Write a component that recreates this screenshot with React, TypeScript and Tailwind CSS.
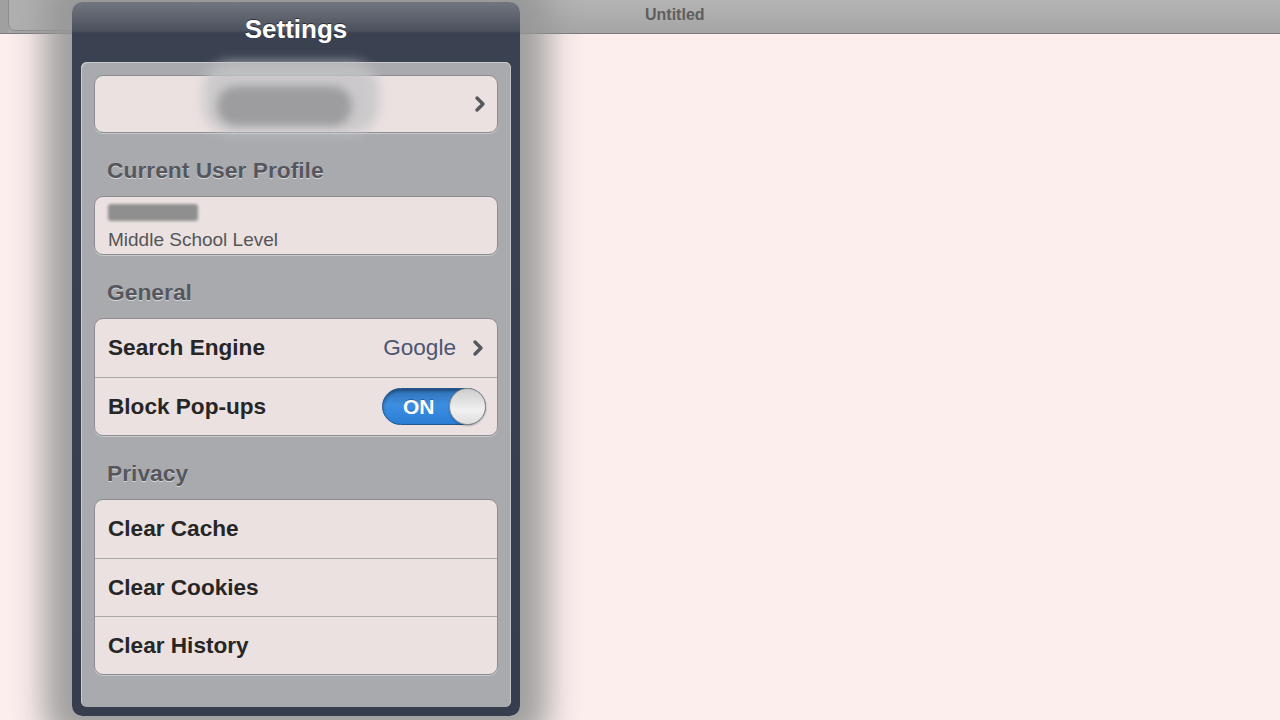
import React from "react";

const font = { fontFamily: '"Liberation Sans", Arial, sans-serif' };

function Chevron() {
  return (
    <svg width="12" height="18" viewBox="0 0 12 18" className="shrink-0">
      <path d="M3 3 L9 9 L3 15" fill="none" stroke="#56585d" strokeWidth="3.4" strokeLinecap="round" strokeLinejoin="round" />
    </svg>
  );
}

function SectionTitle({ children }: { children: React.ReactNode }) {
  return (
    <div className="h-[63px] pl-[26px] pt-[25px] text-[22.8px] font-bold leading-[24px] text-[#55575d] [text-shadow:0_1px_0_rgba(255,255,255,0.55)]">
      {children}
    </div>
  );
}

function Group({ children }: { children: React.ReactNode }) {
  return (
    <div className="mx-[13px] overflow-hidden rounded-[9px] border border-[#8b8c90] bg-[#ebe1e1] shadow-[0_1px_0_#c9cacd]">
      {children}
    </div>
  );
}

function Row({ label, first, children }: { label: string; first?: boolean; children?: React.ReactNode }) {
  return (
    <div
      className={
        "flex h-[58px] items-center justify-between pl-[13px] pr-[13px] " +
        (first ? "" : "border-t border-[#aaa7a8]")
      }
    >
      <span className="text-[22.6px] font-bold text-[#262626]">{label}</span>
      {children}
    </div>
  );
}

function Toggle() {
  return (
    <div className="relative -mr-[2px] flex h-[37px] w-[104px] items-center rounded-full border border-[#23598f] bg-[linear-gradient(to_bottom,#2f6fb4_0%,#3d8ee0_45%,#2a7ed6_100%)] shadow-[inset_0_2px_3px_rgba(0,0,0,0.35)]">
      <span className="ml-[20px] text-[21px] font-bold text-white [text-shadow:0_-1px_0_rgba(0,0,0,0.3)]">ON</span>
      <div className="absolute right-[-1px] top-[-1px] h-[37px] w-[37px] rounded-full border border-[#8e8e8e] bg-[linear-gradient(to_bottom,#cdcdcd_0%,#f0f0f0_60%,#dedede_100%)] shadow-[0_1px_2px_rgba(0,0,0,0.3)]" />
    </div>
  );
}

export default function App() {
  return (
    <div className="relative h-[720px] w-[1280px] overflow-hidden bg-[#fdeeee]" style={font}>
      {/* top toolbar */}
      <div className="flex h-[34px] border-b border-[#7b7b7b] bg-[linear-gradient(to_bottom,#b4b4b4,#a5a5a5)]">
        <div className="w-[8px] bg-[#a0a0a0]" />
        <div className="h-[31px] w-[192px] rounded-bl-[7px] border-b border-l border-r border-[#8d8d8d] bg-[#b0b0b0]" />
        <div className="w-[32px]" />
        <div className="flex flex-1 items-start border-l border-[#8d8d8d] pl-[412px] pt-[3px]">
          <span className="text-[16px] font-bold text-[#5e5e5e]">Untitled</span>
        </div>
      </div>

      {/* settings popover */}
      <div className="absolute left-[72px] top-[2px] flex h-[714px] w-[448px] flex-col rounded-[10px] bg-[linear-gradient(to_bottom,#72767f_0px,#4b515d_29px,#3a4151_31px,#363d4c_100%)] px-[9px] pb-[9px] shadow-[0_0_32px_28px_rgba(150,150,150,0.9)]">
        <div className="flex h-[60px] items-center justify-center pb-[6px]">
          <span className="text-[26px] font-bold text-white [text-shadow:0_-1px_0_rgba(0,0,0,0.5)]">Settings</span>
        </div>

        <div className="flex-1 rounded-[6px] bg-[#a9aaae] pt-[13px] shadow-[inset_1px_1px_0_#c9cacd,inset_-1px_0_0_#c0c1c4]">
          {/* account row */}
          <div className="relative">
            <div className="relative mx-[13px] flex h-[58px] items-center justify-end rounded-[9px] border border-[#8b8c90] bg-[#ebe1e1] pr-[11px] shadow-[0_1px_0_#c9cacd]">
              <div className="absolute left-[108px] top-[-14px] h-[72px] w-[176px] rounded-[28px] bg-[#c4c4c6] opacity-80 blur-[6px]" />
              <div className="absolute left-[122px] top-[10px] h-[40px] w-[135px] rounded-full bg-[#9d9d9f] blur-[4px]" />
              <Chevron />
            </div>
          </div>

          <SectionTitle>Current User Profile</SectionTitle>
          <Group>
            <div className="flex h-[57px] flex-col justify-center pl-[13px] pt-[5px]">
              <div className="mt-[2px] h-[18px] w-[90px] rounded-[3px] bg-[#8f8f90] blur-[1.5px]" />
              <span className="mt-[5px] text-[19px] text-[#555558]">Middle School Level</span>
            </div>
          </Group>

          <SectionTitle>General</SectionTitle>
          <Group>
            <Row label="Search Engine" first>
              <div className="flex items-center gap-[16px]">
                <span className="text-[22.6px] text-[#4b5670]">Google</span>
                <Chevron />
              </div>
            </Row>
            <Row label="Block Pop-ups">
              <Toggle />
            </Row>
          </Group>

          <SectionTitle>Privacy</SectionTitle>
          <Group>
            <Row label="Clear Cache" first />
            <Row label="Clear Cookies" />
            <Row label="Clear History" />
          </Group>
        </div>
      </div>
    </div>
  );
}
